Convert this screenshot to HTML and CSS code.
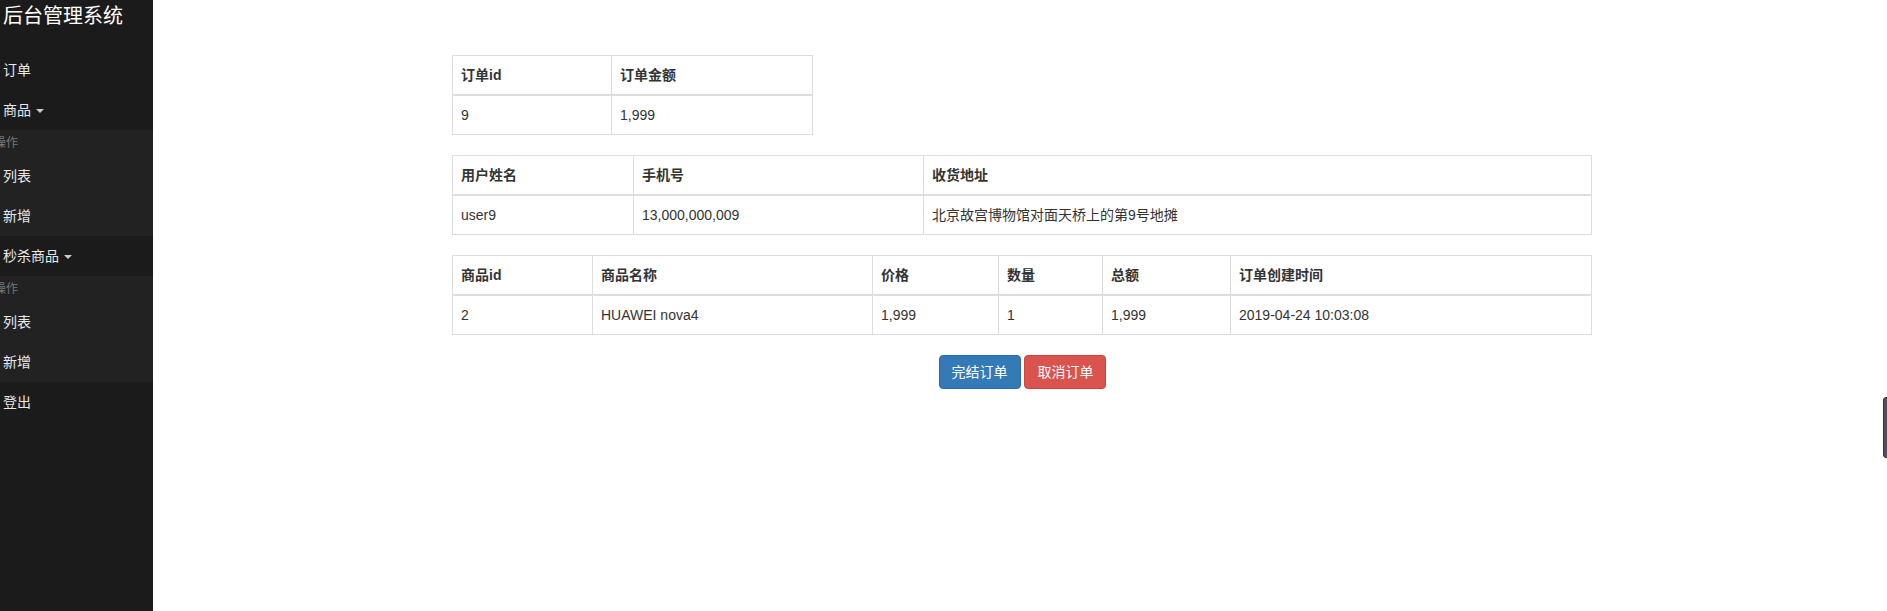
FILE: index.html
```html
<!DOCTYPE html>
<html lang="zh-CN">
<head>
<meta charset="utf-8">
<title>后台管理系统</title>
<link rel="stylesheet" href="styles.css">
</head>
<body>
<div class="layout">
  <aside class="sidebar">
    <div class="brand">后台管理系统</div>
    <div class="nav-item">订单</div>
    <div class="nav-item">商品 <span class="caret"></span></div>
    <div class="submenu">
      <div class="sub-header">操作</div>
      <div class="nav-item">列表</div>
      <div class="nav-item">新增</div>
    </div>
    <div class="nav-item">秒杀商品 <span class="caret"></span></div>
    <div class="submenu">
      <div class="sub-header">操作</div>
      <div class="nav-item">列表</div>
      <div class="nav-item">新增</div>
    </div>
    <div class="nav-item">登出</div>
  </aside>
  <main class="main">
    <div class="content">
      <table class="table table-order">
        <thead>
          <tr><th class="w159">订单id</th><th class="w201">订单金额</th></tr>
        </thead>
        <tbody>
          <tr><td>9</td><td>1,999</td></tr>
        </tbody>
      </table>
      <table class="table table-full">
        <thead>
          <tr><th class="w181">用户姓名</th><th class="w290">手机号</th><th>收货地址</th></tr>
        </thead>
        <tbody>
          <tr><td>user9</td><td>13,000,000,009</td><td>北京故宫博物馆对面天桥上的第9号地摊</td></tr>
        </tbody>
      </table>
      <table class="table table-full">
        <thead>
          <tr><th class="w140">商品id</th><th class="w280">商品名称</th><th class="w126">价格</th><th class="w104">数量</th><th class="w128">总额</th><th>订单创建时间</th></tr>
        </thead>
        <tbody>
          <tr><td>2</td><td>HUAWEI nova4</td><td>1,999</td><td>1</td><td>1,999</td><td>2019-04-24 10:03:08</td></tr>
        </tbody>
      </table>
    </div>
    <div class="actions">
      <button class="btn btn-primary">完结订单</button>
      <button class="btn btn-danger">取消订单</button>
    </div>
  </main>
</div>
<div class="edge-handle"></div>
</body>
</html>
```

FILE: styles.css
```css
* { box-sizing: border-box; }
html, body { margin: 0; padding: 0; height: 100%; }
body {
  font-family: "Liberation Sans", Arial, "Noto Sans CJK SC", sans-serif;
  font-size: 14px;
  line-height: 20px;
  color: #333;
  background: #fff;
  overflow: hidden;
}
.layout { display: flex; min-height: 611px; }
.sidebar {
  width: 153px;
  flex: 0 0 153px;
  background: #1b1b1b;
  overflow: hidden;
  min-height: 611px;
}
.brand {
  height: 50px;
  padding: 2px 0 0 3px;
  font-size: 20px;
  line-height: 28px;
  color: #fff;
  white-space: nowrap;
}
.nav-item {
  height: 40px;
  line-height: 40px;
  padding-left: 3px;
  font-size: 14px;
  color: #e8e8e8;
  white-space: nowrap;
}
.caret {
  display: inline-block;
  width: 0; height: 0;
  margin-left: 1px;
  vertical-align: middle;
  border-top: 4px solid #ccc;
  border-left: 4px solid transparent;
  border-right: 4px solid transparent;
}
.submenu { background: #222; }
.sub-header {
  height: 26px;
  line-height: 26px;
  margin-left: -6px;
  font-size: 12px;
  color: #777;
  white-space: nowrap;
}
.main { flex: 1; padding-top: 55px; }
.content { margin-left: 299px; width: 1140px; }
.table {
  border-collapse: collapse;
  border-spacing: 0;
  margin-bottom: 20px;
  background: #fff;
  table-layout: fixed;
}
.table-order { width: 360px; }
.table-full { width: 1140px; }
.table th, .table td {
  border: 1px solid #ddd;
  padding: 9px 8px;
  line-height: 20px;
  text-align: left;
  vertical-align: top;
  white-space: nowrap;
}
.table th { font-weight: bold; border-bottom: 2px solid #ddd; }
.w159 { width: 159px; }
.w201 { width: 201px; }
.w181 { width: 181px; }
.w290 { width: 290px; }
.w140 { width: 140px; }
.w280 { width: 280px; }
.w126 { width: 126px; }
.w104 { width: 104px; }
.w128 { width: 128px; }
.actions { text-align: center; padding-left: 5px; }
.btn {
  display: inline-block;
  padding: 6px 12px;
  font-family: inherit;
  font-size: 14px;
  line-height: 20px;
  border: 1px solid transparent;
  border-radius: 4px;
  color: #fff;
  cursor: pointer;
}
.btn-primary { background: #337ab7; border-color: #2e6da4; }
.btn-danger { background: #d9534f; border-color: #d43f3a; }
.edge-handle {
  position: absolute;
  left: 1883px;
  top: 397px;
  width: 6px;
  height: 61px;
  background: #4b5262;
  border: 1px solid #2f343e;
  border-radius: 3px 0 0 3px;
}
```
